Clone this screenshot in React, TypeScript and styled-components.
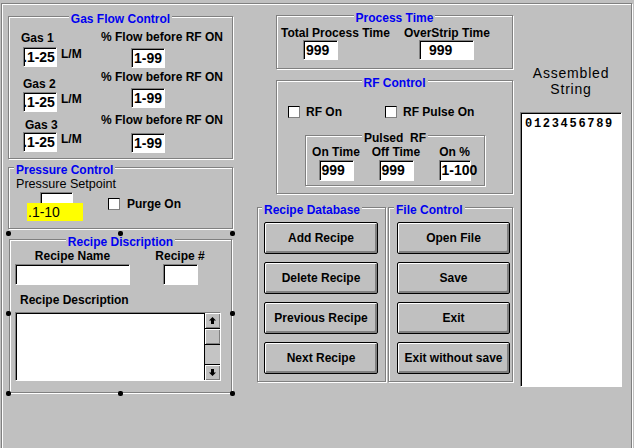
import styled, { createGlobalStyle } from 'styled-components';

const GlobalStyle = createGlobalStyle`
  html, body {
    margin: 0;
    padding: 0;
    background: #c0c0c0;
    overflow: hidden;
  }
  body {
    font-family: 'Liberation Sans', Arial, sans-serif;
    color: #000;
  }
`;

const Form = styled.div`
  box-sizing: border-box;
  margin: 3px 0 0 1px;
  width: 631px;
  height: 470px;
  border: 1px solid #808080;
  box-shadow: inset 1px 1px 0 #fff, 1px 1px 0 #fff;
  display: flex;
  align-items: flex-start;
  padding-left: 6px;
`;

const Column = styled.div<{ $w: number; $left?: number; $top?: number }>`
  width: ${p => p.$w}px;
  margin-left: ${p => p.$left ?? 0}px;
  margin-top: ${p => p.$top ?? 0}px;
  display: flex;
  flex-direction: column;
  align-items: flex-start;
  flex-shrink: 0;
`;

const Frame = styled.div<{ $w: number; $h: number; $top?: number; $left?: number }>`
  box-sizing: border-box;
  width: ${p => p.$w}px;
  height: ${p => p.$h}px;
  margin-top: ${p => p.$top ?? 0}px;
  margin-left: ${p => p.$left ?? 0}px;
  border: 1px solid #808080;
  box-shadow: inset 1px 1px 0 #fff, 1px 1px 0 #fff;
  display: flex;
  flex-direction: column;
  align-items: flex-start;
  flex-shrink: 0;
`;

const FrameTitle = styled.div<{ $left?: boolean; $indent?: number }>`
  align-self: stretch;
  display: flex;
  justify-content: ${p => (p.$left ? 'flex-start' : 'center')};
  padding-left: ${p => p.$indent ?? 0}px;
  margin-top: -5px;
  height: 14px;
`;

const TitleText = styled.span<{ $color?: string; $size?: number }>`
  background: #c0c0c0;
  padding: 0 2px;
  font-size: ${p => p.$size ?? 12}px;
  font-weight: bold;
  line-height: 14px;
  white-space: pre;
  color: ${p => p.$color ?? '#0000f0'};
`;

const Caption = styled.div<{ $top?: number; $left?: number; $size?: number; $normal?: boolean }>`
  margin-top: ${p => p.$top ?? 0}px;
  margin-left: ${p => p.$left ?? 0}px;
  font-size: ${p => p.$size ?? 12}px;
  line-height: 14px;
  font-weight: ${p => (p.$normal ? 'normal' : 'bold')};
  white-space: pre;
`;

const TextBox = styled.div<{
  $w: number;
  $h: number;
  $top?: number;
  $left?: number;
  $pad?: number;
  $clip?: boolean;
}>`
  box-sizing: border-box;
  flex-shrink: 0;
  width: ${p => p.$w}px;
  height: ${p => p.$h}px;
  margin-top: ${p => p.$top ?? 0}px;
  margin-left: ${p => p.$left ?? 0}px;
  background: #fff;
  border: 1px solid;
  border-color: #808080 #fff #fff #808080;
  box-shadow: inset 1px 1px 0 #000;
  font-size: 14px;
  font-weight: bold;
  line-height: ${p => p.$h - 2}px;
  text-indent: ${p => p.$pad ?? 2}px;
  white-space: nowrap;
  overflow: ${p => (p.$clip ? 'hidden' : 'visible')};
`;

const Split = styled.div<{ $top?: number }>`
  display: flex;
  align-items: flex-start;
  margin-top: ${p => p.$top ?? 0}px;
`;

const Stack = styled.div<{ $w?: number; $left?: number; $top?: number; $center?: boolean }>`
  display: flex;
  flex-direction: column;
  align-items: ${p => (p.$center ? 'center' : 'flex-start')};
  width: ${p => (p.$w ? `${p.$w}px` : 'auto')};
  margin-left: ${p => p.$left ?? 0}px;
  margin-top: ${p => p.$top ?? 0}px;
  flex-shrink: 0;
`;

const FieldRow = styled.div<{ $top?: number; $left?: number }>`
  display: flex;
  align-items: flex-start;
  margin-top: ${p => p.$top ?? 0}px;
  margin-left: ${p => p.$left ?? 0}px;
`;

const CheckBox = styled.div<{ $top?: number; $left?: number }>`
  box-sizing: border-box;
  flex-shrink: 0;
  width: 12px;
  height: 12px;
  margin-top: ${p => p.$top ?? 0}px;
  margin-left: ${p => p.$left ?? 0}px;
  background: #fff;
  border: 1px solid;
  border-color: #000 #808080 #808080 #000;
`;

const CheckItem = styled.div<{ $w?: number }>`
  display: flex;
  align-items: flex-start;
  width: ${p => (p.$w ? `${p.$w}px` : 'auto')};
`;

const YellowTag = styled.div`
  box-sizing: border-box;
  width: 56px;
  height: 18px;
  margin-top: -1px;
  padding-left: 1px;
  background: #ffff00;
  font-size: 14px;
  line-height: 18px;
`;

const Selection = styled.div`
  position: relative;
  width: 225px;
  height: 161px;
  margin-top: 4px;
  flex-shrink: 0;
`;

const Handle = styled.span<{ $x: number; $y: number }>`
  position: absolute;
  left: ${p => p.$x - 2}px;
  top: ${p => p.$y - 2}px;
  width: 5px;
  height: 5px;
  border-radius: 2px;
  background: #000;
`;

const TextArea = styled.div`
  box-sizing: border-box;
  width: 206px;
  height: 69px;
  margin: 5px 0 0 5px;
  background: #fff;
  border: 1px solid;
  border-color: #808080 #fff #fff #808080;
  box-shadow: inset 1px 1px 0 #000;
  display: flex;
  justify-content: flex-end;
`;

const ScrollBar = styled.div`
  box-sizing: border-box;
  width: 16px;
  border-left: 1px solid #000;
  display: flex;
  flex-direction: column;
`;

const ScrollPart = styled.div<{ $edge: 'top' | 'bottom' }>`
  box-sizing: border-box;
  height: 16px;
  background: #c0c0c0;
  box-shadow: inset 1px 1px 0 #fff, inset -1px -1px 0 #808080;
  ${p => (p.$edge === 'top' ? 'border-top' : 'border-bottom')}: 1px solid #000;
  display: flex;
  align-items: center;
  justify-content: center;
`;

const ScrollTrack = styled.div`
  flex: 1;
  background: #c4c4c4;
`;

const ButtonStack = styled.div<{ $left: number }>`
  display: flex;
  flex-direction: column;
  gap: 8px;
  margin: 5px 0 0 ${p => p.$left}px;
`;

const Button = styled.button<{ $w: number }>`
  box-sizing: border-box;
  width: ${p => p.$w}px;
  height: 32px;
  padding: 0;
  border: 1px solid #000;
  border-radius: 2px;
  background: #c0c0c0;
  box-shadow: inset 1px 1px 0 #fff, inset -2px -2px 0 #808080;
  font-family: 'Liberation Sans', Arial, sans-serif;
  font-size: 12px;
  font-weight: bold;
  color: #000;
  white-space: nowrap;
  cursor: default;
`;

const AsmLabel = styled.div`
  width: 100%;
  margin-top: 61px;
  font-size: 14px;
  line-height: 16px;
  letter-spacing: 0.8px;
  text-align: center;
`;

const AsmBox = styled.div`
  box-sizing: border-box;
  width: 102px;
  height: 275px;
  margin-top: 15px;
  padding: 4px 0 0 4px;
  background: #fff;
  border: 1px solid;
  border-color: #808080 #fff #fff #808080;
  box-shadow: inset 1px 1px 0 #000;
  font-family: 'Liberation Mono', 'Courier New', monospace;
  font-size: 12px;
  font-weight: bold;
  line-height: 14px;
  letter-spacing: 1.7px;
`;

const Arrow = ({ down }: { down?: boolean }) => (
  <svg width="7" height="7" viewBox="0 0 7 7" style={{ transform: down ? 'rotate(180deg)' : undefined }}>
    <polygon points="3.5,0 7,3.5 5,3.5 5,7 2,7 2,3.5 0,3.5" fill="#000" />
  </svg>
);

const gasRows = [
  { name: 'Gas 1', labelTop: 5, labelLeft: 12, fieldTop: 2 },
  { name: 'Gas 2', labelTop: 10, labelLeft: 14, fieldTop: 1 },
  { name: 'Gas 3', labelTop: 6, labelLeft: 16, fieldTop: 0 },
];

const flowRows = [
  { labelTop: 4, fieldTop: 4 },
  { labelTop: 2, fieldTop: 4 },
  { labelTop: 5, fieldTop: 6 },
];

const pulsed = [
  { label: 'On Time', value: '999', col: 60, w: 35 },
  { label: 'Off Time', value: '999', col: 60, w: 35 },
  { label: 'On %', value: '1-100', col: 57, w: 32 },
];

const handles = [
  [0, 0], [112, 0], [224, 0],
  [0, 80], [224, 80],
  [0, 160], [112, 160], [224, 160],
];

export default function App() {
  return (
    <>
      <GlobalStyle />
      <Form>
        <Column $w={225}>
          <Frame $w={225} $h={143} $top={12}>
            <FrameTitle>
              <TitleText>Gas Flow Control</TitleText>
            </FrameTitle>
            <Split>
              <Stack $w={92}>
                {gasRows.map(r => (
                  <div key={r.name}>
                    <Caption $top={r.labelTop} $left={r.labelLeft}>{r.name}</Caption>
                    <FieldRow $top={r.fieldTop} $left={14}>
                      <TextBox $w={34} $h={20} $pad={-1} $clip>.1-25</TextBox>
                      <Caption $left={4}>L/M</Caption>
                    </FieldRow>
                  </div>
                ))}
              </Stack>
              <Stack>
                {flowRows.map((r, i) => (
                  <div key={i}>
                    <Caption $top={r.labelTop}>% Flow before RF ON</Caption>
                    <TextBox $w={34} $h={20} $top={r.fieldTop} $left={30}>1-99</TextBox>
                  </div>
                ))}
              </Stack>
            </Split>
          </Frame>

          <Frame $w={225} $h={62} $top={8}>
            <FrameTitle $left $indent={5}>
              <TitleText>Pressure Control</TitleText>
            </FrameTitle>
            <Caption $left={7} $size={12.6} $normal>Pressure Setpoint</Caption>
            <Split>
              <Stack $left={18}>
                <TextBox $w={33} $h={12} $top={1} $left={13} />
                <YellowTag>.1-10</YellowTag>
              </Stack>
              <CheckBox $top={7} $left={25} />
              <Caption $top={6} $left={7}>Purge On</Caption>
            </Split>
          </Frame>

          <Selection>
            <Frame $w={223} $h={154} $top={6} $left={1}>
              <FrameTitle>
                <TitleText>Recipe Discription</TitleText>
              </FrameTitle>
              <Split>
                <Stack $w={115} $left={5} $center>
                  <Caption>Recipe Name</Caption>
                  <TextBox $w={115} $h={21} $top={1} />
                </Stack>
                <Stack $w={60} $left={20} $center>
                  <Caption>Recipe #</Caption>
                  <TextBox $w={35} $h={21} $top={1} />
                </Stack>
              </Split>
              <Caption $top={8} $left={10}>Recipe Description</Caption>
              <TextArea>
                <ScrollBar>
                  <ScrollPart $edge="bottom"><Arrow /></ScrollPart>
                  <ScrollPart $edge="bottom" />
                  <ScrollTrack />
                  <ScrollPart $edge="top"><Arrow down /></ScrollPart>
                </ScrollBar>
              </TextArea>
            </Frame>
            {handles.map(([x, y]) => (
              <Handle key={`${x}-${y}`} $x={x} $y={y} />
            ))}
          </Selection>
        </Column>

        <Column $w={256} $left={24}>
          <Frame $w={237} $h={54} $top={11} $left={19}>
            <FrameTitle>
              <TitleText>Process Time</TitleText>
            </FrameTitle>
            <Split>
              <Stack $w={123} $left={4}>
                <Caption $top={1}>Total Process Time</Caption>
                <TextBox $w={35} $h={20} $left={22}>999</TextBox>
              </Stack>
              <Stack>
                <Caption $top={1}>OverStrip Time</Caption>
                <TextBox $w={55} $h={20} $left={15} $pad={9}>999</TextBox>
              </Stack>
            </Split>
          </Frame>

          <Frame $w={237} $h={114} $top={11} $left={19}>
            <FrameTitle>
              <TitleText>RF Control</TitleText>
            </FrameTitle>
            <FieldRow $top={15} $left={11}>
              <CheckItem $w={97}>
                <CheckBox $top={1} />
                <Caption $left={6}>RF On</Caption>
              </CheckItem>
              <CheckItem>
                <CheckBox $top={1} />
                <Caption $left={6}>RF Pulse On</Caption>
              </CheckItem>
            </FieldRow>
            <Frame $w={180} $h={51} $top={16} $left={28}>
              <FrameTitle>
                <TitleText $color="#000">{'Pulsed  RF'}</TitleText>
              </FrameTitle>
              <Split>
                {pulsed.map(c => (
                  <Stack key={c.label} $w={c.col} $center>
                    <Caption>{c.label}</Caption>
                    <TextBox $w={c.w} $h={21} $top={1}>{c.value}</TextBox>
                  </Stack>
                ))}
              </Split>
            </Frame>
          </Frame>

          <Split $top={13}>
            <Frame $w={129} $h={175}>
              <FrameTitle $left $indent={4}>
                <TitleText>Recipe Database</TitleText>
              </FrameTitle>
              <ButtonStack $left={6}>
                <Button $w={114}>Add Recipe</Button>
                <Button $w={114}>Delete Recipe</Button>
                <Button $w={114}>Previous Recipe</Button>
                <Button $w={114}>Next Recipe</Button>
              </ButtonStack>
            </Frame>
            <Frame $w={125} $h={175} $left={2}>
              <FrameTitle $left $indent={5}>
                <TitleText>File Control</TitleText>
              </FrameTitle>
              <ButtonStack $left={8}>
                <Button $w={113}>Open File</Button>
                <Button $w={113}>Save</Button>
                <Button $w={113}>Exit</Button>
                <Button $w={113}>Exit without save</Button>
              </ButtonStack>
            </Frame>
          </Split>
        </Column>

        <Column $w={102} $left={7}>
          <AsmLabel>
            Assembled
            <br />
            String
          </AsmLabel>
          <AsmBox>0123456789</AsmBox>
        </Column>
      </Form>
    </>
  );
}
